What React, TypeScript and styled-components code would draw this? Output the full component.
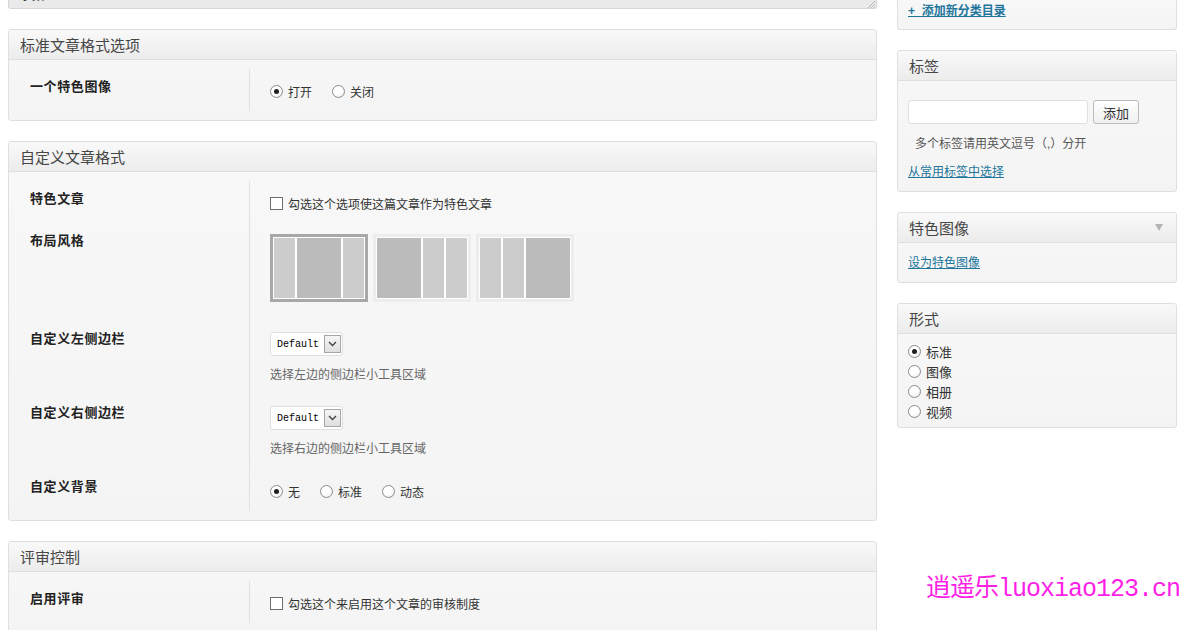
import React from "react";
import styled, { createGlobalStyle } from "styled-components";

const GlobalStyle = createGlobalStyle`
  html, body {
    margin: 0;
    padding: 0;
    background: #fff;
  }
  body {
    font-family: "Liberation Sans", "Noto Sans CJK SC", sans-serif;
    font-size: 12px;
    color: #333;
  }
  * {
    box-sizing: border-box;
  }
`;

const Page = styled.div`
  position: relative;
  display: grid;
  grid-template-columns: 869px 280px;
  column-gap: 20px;
  align-items: start;
  padding: 0 5px 0 8px;
  height: 630px;
  overflow: hidden;
`;

const Column = styled.div`
  display: flex;
  flex-direction: column;
  gap: 20px;
`;

const Postbox = styled.div<{ $cutTop?: boolean }>`
  border: 1px solid #dfdfdf;
  border-top-width: ${(p) => (p.$cutTop ? 0 : 1)}px;
  border-radius: ${(p) => (p.$cutTop ? "0 0 3px 3px" : "3px")};
  background: linear-gradient(to bottom, #f8f8f8, #f4f4f4);
`;

const StatusBar = styled.div`
  position: relative;
  height: 9px;
  overflow: hidden;
  background: #eaeaea;
  border: 1px solid #d6d6d6;
  border-top: 0;
  border-radius: 0 0 3px 3px;
  padding-left: 11px;
  color: #333;
`;

const StatusText = styled.div`
  margin-top: -12px;
  line-height: 16px;
  font-size: 12px;
`;

const ResizeGrip = styled.svg`
  position: absolute;
  right: 1px;
  bottom: 0;
`;

const BoxHeader = styled.div`
  display: flex;
  align-items: center;
  justify-content: space-between;
  height: 30px;
  padding: 0 11px;
  font-size: 15px;
  color: #464646;
  background: linear-gradient(to bottom, #f9f9f9, #ececec);
  border-bottom: 1px solid #dfdfdf;
  border-radius: 3px 3px 0 0;
`;

const Toggle = styled.span`
  width: 0;
  height: 0;
  border-left: 4px solid transparent;
  border-right: 4px solid transparent;
  border-top: 7px solid #b4b4b4;
  margin-right: 2px;
`;

const OptionsBody = styled.div`
  padding: 9px 0 9px;
`;

const OptionRow = styled.div`
  display: grid;
  grid-template-columns: 241px 1fr;
`;

const OptionLabel = styled.div`
  padding: 10px 0 0 21px;
  font-size: 13px;
  line-height: 16px;
  font-weight: bold;
  letter-spacing: 0.6px;
  color: #222;
  border-right: 1px solid #e0e0e0;
`;

const OptionValue = styled.div`
  padding: 11px 20px 9px;
`;

const ChoiceLine = styled.div`
  display: flex;
  align-items: center;
  height: 22px;
  gap: 20px;
`;

const Choice = styled.label`
  display: inline-flex;
  align-items: center;
  gap: 5px;
  font-size: 12px;
  color: #333;
`;

const Radio = styled.span<{ $checked?: boolean }>`
  position: relative;
  display: inline-block;
  width: 13px;
  height: 13px;
  border-radius: 50%;
  border: 1px solid #8c8c8c;
  background: radial-gradient(circle at 40% 35%, #fff 40%, #e6e6e6);

  &::after {
    content: "";
    display: ${(p) => (p.$checked ? "block" : "none")};
    position: absolute;
    left: 3px;
    top: 3px;
    width: 5px;
    height: 5px;
    border-radius: 50%;
    background: #1e1e1e;
  }
`;

const Checkbox = styled.span`
  display: inline-block;
  width: 13px;
  height: 13px;
  border: 1px solid #6e6e6e;
  background: #fff;
`;

const ThumbRow = styled.div`
  display: flex;
  gap: 5px;
  margin-bottom: 10px;
`;

const Thumb = styled.div<{ $selected?: boolean }>`
  width: 98px;
  height: 68px;
  border: 3px solid ${(p) => (p.$selected ? "#a8a8a8" : "#ededed")};
`;

const ThumbInner = styled.div`
  display: flex;
  gap: 2px;
  height: 100%;
  padding: 1px;
  background: #fff;
`;

const ThumbCol = styled.div<{ $wide?: boolean }>`
  width: ${(p) => (p.$wide ? 44 : 21)}px;
  background: ${(p) => (p.$wide ? "#bbbbbb" : "#cccccc")};
`;

const SelectBox = styled.div`
  display: flex;
  align-items: center;
  justify-content: space-between;
  width: 73px;
  height: 24px;
  padding: 0 1px 0 6px;
  background: #fff;
  border: 1px solid #dfdfdf;
  border-radius: 3px;
  font-family: "Liberation Mono", monospace;
  font-size: 10px;
  color: #000;
`;

const SelectArrow = styled.span`
  display: flex;
  align-items: center;
  justify-content: center;
  width: 17px;
  height: 18px;
  border: 1px solid #a6a6a6;
  background: linear-gradient(to bottom, #f6f6f6, #dedede);
`;

const Help = styled.div`
  margin: 11px 0 3px;
  line-height: 16px;
  font-size: 12px;
  color: #666;
`;

const SideBody = styled.div<{ $top?: number; $bottom?: number }>`
  padding: ${(p) => p.$top ?? 12}px 10px ${(p) => p.$bottom ?? 11}px;
`;

const Link = styled.a<{ $strong?: boolean }>`
  display: block;
  line-height: 16px;
  font-size: 12px;
  font-weight: ${(p) => (p.$strong ? "bold" : "normal")};
  color: #21759b;
  text-decoration: underline;
  white-space: pre;
`;

const TagForm = styled.div`
  display: flex;
  gap: 5px;
`;

const TagInput = styled.div`
  width: 180px;
  height: 24px;
  background: #fff;
  border: 1px solid #dfdfdf;
  border-radius: 3px;
`;

const Button = styled.button`
  width: 46px;
  height: 24px;
  padding: 0;
  border: 1px solid #bbb;
  border-radius: 3px;
  background: linear-gradient(to bottom, #fefefe, #f0f0f0);
  font-family: inherit;
  font-size: 13px;
  color: #333;
`;

const TagHint = styled.div`
  display: flex;
  align-items: center;
  margin: 12px 0 12px 7px;
  line-height: 16px;
  font-size: 12px;
  color: #555;
`;

const Paren = styled.span`
  display: inline-block;
  width: 12px;
  text-align: center;
`;

const FormatList = styled.div`
  display: flex;
  flex-direction: column;
`;

const FormatItem = styled(Choice)`
  height: 20px;
  font-size: 13px;
`;

const Watermark = styled.div`
  position: absolute;
  left: 926px;
  top: 575px;
  font-family: "Liberation Mono", "Noto Sans CJK SC", monospace;
  font-size: 25px;
  letter-spacing: -1px;
  line-height: 30px;
  color: #ff1ee6;
`;

const Chevron = () => (
  <svg width="9" height="6" viewBox="0 0 9 6">
    <path d="M1 1 L4.5 4.5 L8 1" fill="none" stroke="#444" strokeWidth="1.4" />
  </svg>
);

const layouts: boolean[][] = [
  [false, true, false],
  [true, false, false],
  [false, false, true],
];

const SidebarSelect = ({ help }: { help: string }) => (
  <>
    <SelectBox>
      Default
      <SelectArrow>
        <Chevron />
      </SelectArrow>
    </SelectBox>
    <Help>{help}</Help>
  </>
);

export default function App() {
  return (
    <Page>
      <GlobalStyle />
      <Column>
        <StatusBar>
          <StatusText>字数: 0</StatusText>
          <ResizeGrip width="9" height="8" viewBox="0 0 9 8">
            <path d="M2 8 L9 1 M5 8 L9 4 M8 8 L9 7" stroke="#b5b5b5" strokeWidth="1" />
          </ResizeGrip>
        </StatusBar>

        <Postbox>
          <BoxHeader>标准文章格式选项</BoxHeader>
          <OptionsBody>
            <OptionRow>
              <OptionLabel>一个特色图像</OptionLabel>
              <OptionValue>
                <ChoiceLine>
                  <Choice>
                    <Radio $checked />
                    打开
                  </Choice>
                  <Choice>
                    <Radio />
                    关闭
                  </Choice>
                </ChoiceLine>
              </OptionValue>
            </OptionRow>
          </OptionsBody>
        </Postbox>

        <Postbox>
          <BoxHeader>自定义文章格式</BoxHeader>
          <OptionsBody>
            <OptionRow>
              <OptionLabel>特色文章</OptionLabel>
              <OptionValue>
                <ChoiceLine>
                  <Choice>
                    <Checkbox />
                    勾选这个选项使这篇文章作为特色文章
                  </Choice>
                </ChoiceLine>
              </OptionValue>
            </OptionRow>
            <OptionRow>
              <OptionLabel>布局风格</OptionLabel>
              <OptionValue>
                <ThumbRow>
                  {layouts.map((cols, i) => (
                    <Thumb key={i} $selected={i === 0}>
                      <ThumbInner>
                        {cols.map((wide, j) => (
                          <ThumbCol key={j} $wide={wide} />
                        ))}
                      </ThumbInner>
                    </Thumb>
                  ))}
                </ThumbRow>
              </OptionValue>
            </OptionRow>
            <OptionRow>
              <OptionLabel>自定义左侧边栏</OptionLabel>
              <OptionValue>
                <SidebarSelect help="选择左边的侧边栏小工具区域" />
              </OptionValue>
            </OptionRow>
            <OptionRow>
              <OptionLabel>自定义右侧边栏</OptionLabel>
              <OptionValue>
                <SidebarSelect help="选择右边的侧边栏小工具区域" />
              </OptionValue>
            </OptionRow>
            <OptionRow>
              <OptionLabel>自定义背景</OptionLabel>
              <OptionValue>
                <ChoiceLine>
                  <Choice>
                    <Radio $checked />
                    无
                  </Choice>
                  <Choice>
                    <Radio />
                    标准
                  </Choice>
                  <Choice>
                    <Radio />
                    动态
                  </Choice>
                </ChoiceLine>
              </OptionValue>
            </OptionRow>
          </OptionsBody>
        </Postbox>

        <Postbox>
          <BoxHeader>评审控制</BoxHeader>
          <OptionsBody>
            <OptionRow>
              <OptionLabel>启用评审</OptionLabel>
              <OptionValue>
                <ChoiceLine>
                  <Choice>
                    <Checkbox />
                    勾选这个来启用这个文章的审核制度
                  </Choice>
                </ChoiceLine>
              </OptionValue>
            </OptionRow>
          </OptionsBody>
        </Postbox>
      </Column>

      <Column>
        <Postbox $cutTop>
          <SideBody $top={3} $bottom={10}>
            <Link $strong>+  添加新分类目录</Link>
          </SideBody>
        </Postbox>

        <Postbox>
          <BoxHeader>标签</BoxHeader>
          <SideBody $top={19}>
            <TagForm>
              <TagInput />
              <Button>添加</Button>
            </TagForm>
            <TagHint>
              多个标签请用英文逗号<Paren>（</Paren>,<Paren>）</Paren>分开
            </TagHint>
            <Link>从常用标签中选择</Link>
          </SideBody>
        </Postbox>

        <Postbox>
          <BoxHeader>
            特色图像
            <Toggle />
          </BoxHeader>
          <SideBody>
            <Link>设为特色图像</Link>
          </SideBody>
        </Postbox>

        <Postbox>
          <BoxHeader>形式</BoxHeader>
          <SideBody $top={7} $bottom={6}>
            <FormatList>
              {["标准", "图像", "相册", "视频"].map((f, i) => (
                <FormatItem key={f}>
                  <Radio $checked={i === 0} />
                  {f}
                </FormatItem>
              ))}
            </FormatList>
          </SideBody>
        </Postbox>
      </Column>

      <Watermark>逍遥乐luoxiao123.cn</Watermark>
    </Page>
  );
}
